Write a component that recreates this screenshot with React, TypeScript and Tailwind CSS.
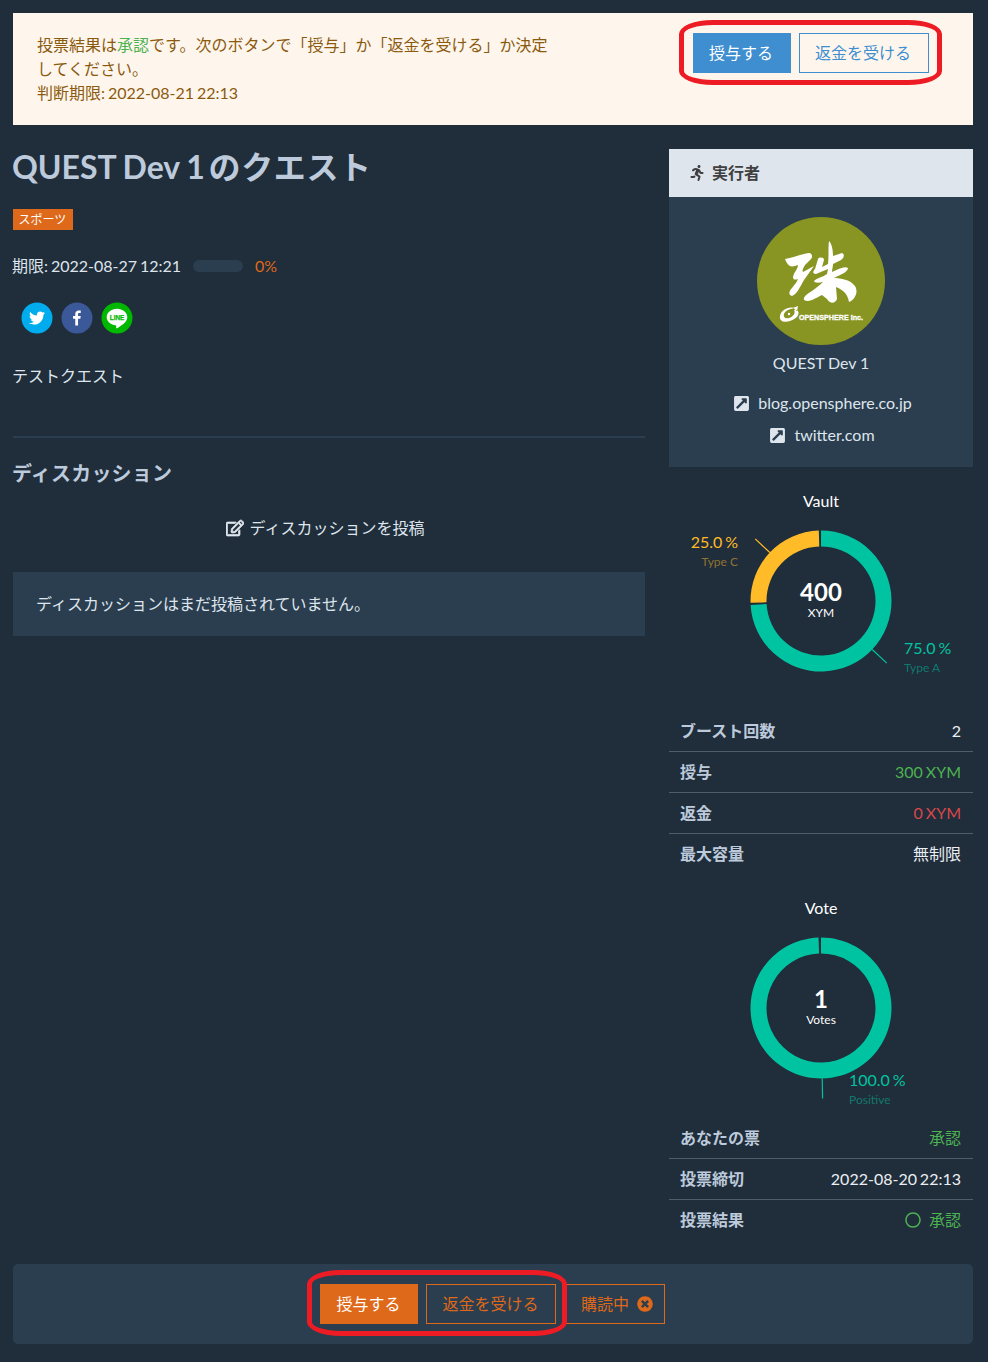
import type { ReactNode } from "react";
import { FaExternalLinkSquareAlt, FaRegCircle, FaRegEdit, FaRunning, FaTimesCircle } from "react-icons/fa";

type Slice = { from: number; to: number; color: string };

function polar(r: number, deg: number) {
  const a = (deg * Math.PI) / 180;
  return `${152 + r * Math.sin(a)} ${90 - r * Math.cos(a)}`;
}

function arc({ from, to }: Slice) {
  const large = to - from > 180 ? 1 : 0;
  return `M${polar(70.5, from)}A70.5 70.5 0 ${large} 1 ${polar(70.5, to)}L${polar(54.5, to)}A54.5 54.5 0 ${large} 0 ${polar(54.5, from)}Z`;
}

function Donut({ slices, value, unit, children }: { slices: Slice[]; value: string; unit: string; children: ReactNode }) {
  return (
    <svg width="304" height="200" viewBox="0 0 304 200" className="block shrink-0">
      {slices.map((s) => (
        <g key={s.from}>
          <path d={arc(s)} fill={s.color} />
          <path d={`M${polar(70.5, (s.from + s.to) / 2)}L${polar(90.5, (s.from + s.to) / 2)}`} stroke={s.color} strokeWidth="1.2" />
        </g>
      ))}
      <text x="152" y="90" textAnchor="middle" fill="#fff" className="text-[24px] font-bold">{value}</text>
      <text x="152" y="106" textAnchor="middle" fill="#fff" className="text-[12px]">{unit}</text>
      {children}
    </svg>
  );
}

function Row({ label, last, tone, children }: { label: string; last?: boolean; tone?: string; children: ReactNode }) {
  return (
    <div className={`flex items-center justify-between pr-3 pl-[11px] ${last ? "h-[40px]" : "h-[41px] border-b border-[#4e5d6c]"}`}>
      <span className="font-bold text-[#bccadb]">{label}</span>
      <span className={`flex items-center gap-2 ${tone ?? "text-[#ebeff3]"}`}>{children}</span>
    </div>
  );
}

function Highlight({ className }: { className: string }) {
  return <div className={`pointer-events-none absolute rounded-[34px/14px] border-[5px] border-[#ed1c24] ${className}`} />;
}

function Avatar() {
  return (
    <svg width="128" height="128" viewBox="0 0 128 128" className="block [word-spacing:0px]">
      <circle cx="64" cy="64" r="64" fill="#899522" />
      <g fill="#fff">
        <path d="M28 42c8-1 16-5 24-6 3 0 4 4 2 6l-6 6c-2 3-3 6-2 7l11-6-10 14c-4 7-7 14-12 16-4-1-3-5 0-8 3-4 5-6 6-9-3 1-5 1-5-2 1-5 5-8 5-12-3 1-6 2-8 1-2-1-4-4-5-7z" />
        <path d="M72 24c3 3 4 9 4 15l9-3c3 1 2 5-1 7l-8 4c0 3-1 5-1 8 7-3 12-6 16-4 0 4-8 7-14 10 7 0 16 2 20 7 5 5 2 14-5 17-1-7-5-12-13-15l1 12c-2 5-7 5-10 0l-5-4c-7 3-12 8-18 5-1-3 3-6 8-9 4-3 8-6 11-9-4 1-9 1-9-1 3-3 9-4 13-7l1-5-12 5c-4 0-3-3-1-5l3-10c1-2 6-2 6 1l-2 7 6-3c1-8 0-16 1-23z" />
        <path fillRule="evenodd" d="M38 91c-7-2-14 2-15 8-1 5 4 7 10 5 7-2 11-8 7-11l-3 0c2 3-1 7-5 8-4 1-6-1-5-4 1-3 5-5 11-6zM36 91l5-2-1 5z" />
        <circle cx="32" cy="97" r="1.2" />
        <text x="42" y="103" fontFamily="Liberation Sans" fontWeight="700" fontSize="7.4" textLength="64" lengthAdjust="spacingAndGlyphs" stroke="#fff" strokeWidth=".3">OPENSPHERE Inc.</text>
      </g>
    </svg>
  );
}

function Social() {
  return (
    <div className="mt-6 flex gap-2 pl-2">
      <svg width="32" height="32" viewBox="0 0 64 64">
        <circle cx="32" cy="32" r="31" fill="#00aced" />
        <path fill="#fff" d="M48,22.1c-1.2,0.5-2.4,0.9-3.8,1c1.4-0.8,2.4-2.1,2.9-3.6c-1.3,0.8-2.7,1.3-4.2,1.6 C41.7,19.8,40,19,38.2,19c-3.6,0-6.6,2.9-6.6,6.6c0,0.5,0.1,1,0.2,1.5c-5.5-0.3-10.3-2.9-13.5-6.9c-0.6,1-0.9,2.1-0.9,3.3 c0,2.3,1.2,4.3,2.9,5.5c-1.1,0-2.1-0.3-3-0.8c0,0,0,0.1,0,0.1c0,3.2,2.3,5.8,5.3,6.4c-0.6,0.1-1.1,0.2-1.7,0.2c-0.4,0-0.8,0-1.2-0.1 c0.8,2.6,3.3,4.5,6.1,4.6c-2.2,1.8-5.1,2.8-8.2,2.8c-0.5,0-1.1,0-1.6-0.1c2.9,1.9,6.4,2.9,10.1,2.9c12.1,0,18.7-10,18.7-18.7 c0-0.3,0-0.6,0-0.8C46,24.5,47.1,23.4,48,22.1z" />
      </svg>
      <svg width="32" height="32" viewBox="0 0 64 64">
        <circle cx="32" cy="32" r="31" fill="#3b5998" />
        <path fill="#fff" d="M34.1,47V33.3h4.6l0.7-5.3h-5.3v-3.4c0-1.5,0.4-2.6,2.6-2.6l2.8,0v-4.8c-0.5-0.1-2.2-0.2-4.1-0.2 c-4.1,0-6.9,2.5-6.9,7V28H24v5.3h4.5V47H34.1z" />
      </svg>
      <svg width="32" height="32" viewBox="0 0 64 64">
        <circle cx="32" cy="32" r="31" fill="#00b800" />
        <path fill="#fff" d="M52.62 30.138c0 3.693-1.432 7.019-4.42 10.296h.001c-4.326 4.979-14 11.044-16.201 11.972-2.2.927-1.876-.591-1.786-1.112l.294-1.765c.069-.527.142-1.343-.066-1.865-.232-.574-1.146-.872-1.817-1.016-9.909-1.31-17.245-8.238-17.245-16.51 0-9.226 9.251-16.733 20.62-16.733 11.37 0 20.62 7.507 20.62 16.733z" />
        <text x="17.5" y="35.2" fill="#00b800" stroke="#00b800" strokeWidth=".5" fontFamily="Liberation Sans" fontWeight="700" fontSize="14" textLength="29" lengthAdjust="spacingAndGlyphs">LINE</text>
      </svg>
    </div>
  );
}

export default function App() {
  return (
    <div className="relative h-[1362px] w-[988px] overflow-hidden bg-[#202d3a] pt-[13px] pr-[15px] pl-[13px] font-[Lato,'Noto_Sans_CJK_JP',sans-serif] text-base leading-6 [word-spacing:-1.2px] text-[#dee5ed]">
      <div className="flex h-[112px] justify-between bg-[#fef6ec] px-6 py-5 text-[#8b5a0f]">
        <p className="w-[520px]">
          投票結果は<span className="text-[#4db251]">承認</span>です。次のボタンで「授与」か「返金を受ける」か決定<br />
          してください。<br />
          判断期限: 2022-08-21 22:13
        </p>
        <div className="mr-5 flex gap-2">
          <button className="h-10 w-[98px] bg-[#3e8ed0] pr-0.5 text-white">授与する</button>
          <button className="h-10 w-[130px] border border-[#3e8ed0] pr-0.5 text-[#3e8ed0]">返金を受ける</button>
        </div>
      </div>

      <div className="mt-6 flex h-[1091px] gap-6">
        <main className="w-[632px]">
          <h1 className="-ml-px text-[32px] leading-9 font-bold [word-spacing:-1px] text-[#bccadb]">QUEST Dev 1 <span className="-ml-[3px] tracking-[0.6px]">のクエスト</span></h1>
          <div className="mt-6 flex h-[21px] w-[60px] items-center justify-center bg-[#df691a] pr-px text-xs text-white"><span>スポーツ</span></div>
          <div className="mt-6 flex items-center gap-3">
            <span className="-ml-px w-[169px] whitespace-nowrap">期限: 2022-08-27 12:21</span>
            <span className="h-3 w-[50px] rounded-full bg-[#2b3e4f]" />
            <span className="text-[#df691a]">0%</span>
          </div>
          <Social />
          <p className="mt-[30px] -ml-px">テストクエスト</p>
          <div className="mt-12 h-0.5 bg-[#2b3e4f]" />
          <h2 className="mt-[23px] -ml-px text-xl leading-6 font-bold tracking-[0.2px] text-[#bccadb]">ディスカッション</h2>
          <div className="mt-[31px] flex items-center justify-center gap-1.5 pr-[8px]">
            <FaRegEdit size={18} stroke="currentColor" strokeWidth={22} />
            <span>ディスカッションを投稿</span>
          </div>
          <div className="mt-8 h-16 bg-[#2b3e4f] py-5 pr-6 pl-[23px]">ディスカッションはまだ投稿されていません。</div>
        </main>

        <aside className="flex w-[304px] flex-col">
          <div className="flex h-12 items-center gap-[7px] bg-[#dee5ed] pl-5 font-bold text-[#404040]">
            <FaRunning size={16} />
            <span>実行者</span>
          </div>
          <div className="flex h-[270px] flex-col items-center bg-[#2b3e4f] pt-5">
            <Avatar />
            <span className="mt-1.5 [word-spacing:-0.4px]">QUEST Dev 1</span>
            <span className="mt-4 flex items-center gap-2 pl-[3px]"><FaExternalLinkSquareAlt size={17} />blog.opensphere.co.jp</span>
            <span className="mt-2 flex items-center gap-2 pl-[2px]"><FaExternalLinkSquareAlt size={17} />twitter.com</span>
          </div>
          <div className="mt-[23px] h-[21px] text-center leading-[22px] text-white">Vault</div>
          <Donut slices={[{ from: 0, to: 266.8, color: "#00c4a1" }, { from: 268.6, to: 358.2, color: "#ffbb28" }]} value="400" unit="XYM">
            <text x="69" y="37" textAnchor="end" fill="#ffbb28" className="text-base">25.0 %</text>
            <text x="69" y="55" textAnchor="end" fill="#ffbb28" fillOpacity=".5" className="text-xs [word-spacing:0px]">Type C</text>
            <text x="235" y="143" fill="#00c4a1" className="text-base">75.0 %</text>
            <text x="235" y="161" fill="#00c4a1" fillOpacity=".5" className="text-xs [word-spacing:0px]">Type A</text>
          </Donut>
          <Row label="ブースト回数">2</Row>
          <Row label="授与" tone="text-[#4db251]">300 XYM</Row>
          <Row label="返金" tone="text-[#d9474b]">0 XYM</Row>
          <Row label="最大容量" last>無制限</Row>
          <div className="mt-[23px] h-[21px] text-center leading-[22px] text-white">Vote</div>
          <Donut slices={[{ from: 0, to: 358, color: "#00c4a1" }]} value="1" unit="Votes">
            <text x="180" y="168" fill="#00c4a1" className="text-base">100.0 %</text>
            <text x="180" y="186" fill="#00c4a1" fillOpacity=".5" className="text-xs">Positive</text>
          </Donut>
          <Row label="あなたの票" tone="text-[#4db251]">承認</Row>
          <Row label="投票締切">2022-08-20 22:13</Row>
          <Row label="投票結果" last tone="text-[#4db251]"><FaRegCircle size={16} />承認</Row>
        </aside>
      </div>

      <footer className="mt-6 flex h-20 items-center justify-center gap-2 rounded-[5px] bg-[#2b3e4f] pr-0.5 text-[#df691a]">
        <button className="h-10 w-[98px] bg-[#df691a] text-white">授与する</button>
        <button className="h-10 w-[130px] border border-[#df691a]">返金を受ける</button>
        <button className="flex h-10 w-[101px] items-center justify-center gap-2 border border-[#df691a] pl-1.5">購読中<FaTimesCircle size={16} /></button>
      </footer>

      <Highlight className="top-[20px] left-[679px] h-[65px] w-[263px]" />
      <Highlight className="top-[1270px] left-[307px] h-[66px] w-[260px]" />
    </div>
  );
}
